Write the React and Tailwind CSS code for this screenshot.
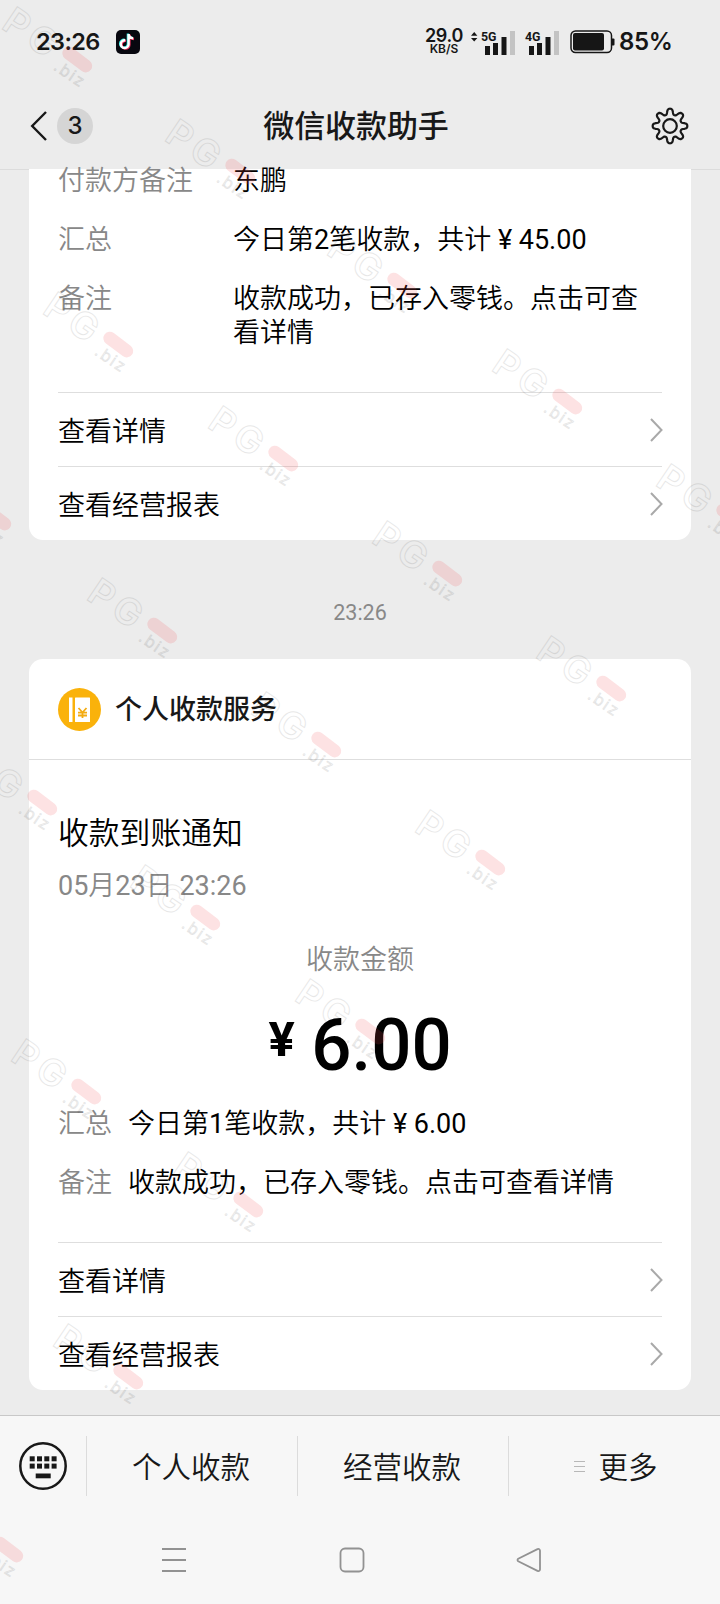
const WATERMARKS = [
  [77, 58], [240, 170], [402, 284], [567, 400], [731, 515],
  [118, 343], [283, 457], [447, 572], [611, 687],
  [-4, 516], [162, 629], [326, 743], [490, 861],
  [42, 801], [205, 916], [370, 1030],
  [86, 1090], [248, 1203],
  [128, 1375],
  [8, 1548],
];

function Watermark({ x, y }) {
  return (
    <div className="absolute h-0 w-0 rotate-[34deg]" style={{ left: x, top: y + 2 }}>
      <span className="absolute -left-[82px] -top-[16px] font-['Inter'] text-[37px] leading-[38px] font-semibold tracking-[5px] text-transparent opacity-[0.09] [-webkit-text-stroke:1px_#000]">
        PG
      </span>
      <span className="absolute -left-[17px] -top-[7px] h-[13px] w-[34px] rotate-[3deg] rounded-full bg-[#f04a4e]/16" />
      <span className="absolute -left-[15px] top-[5px] font-['Inter'] text-[16px] leading-[20px] tracking-[2px] text-transparent opacity-[0.1] [-webkit-text-stroke:0.8px_#000]">
        .biz
      </span>
    </div>
  );
}

function TikTokIcon() {
  const note = 'M12.6 4v10.2a3.9 3.9 0 1 1-3.4-3.9M12.6 4.2c.3 2.4 2 4 4.6 4.2';
  return (
    <svg className="h-6 w-6" viewBox="0 0 24 24" fill="none" strokeWidth="2.4">
      <rect width="24" height="24" rx="5" fill="#07070f" />
      <path d={note} stroke="#25e5df" transform="translate(-.7 -.5)" />
      <path d={note} stroke="#f2315f" transform="translate(.8 .6)" />
      <path d={note} stroke="#fff" />
    </svg>
  );
}

function Signal({ label, arrows }) {
  return (
    <svg className="h-[26px] w-[46px]" viewBox="0 0 46 26" fill="#161616">
      {arrows && <path d="M1 6.7 4.2 3l3.2 3.7zM1 8.9h6.4L4.2 12.6z" />}
      <text x="11" y="12" fontFamily="Roboto" fontSize="13.5" fontWeight="700" textLength="15.5" lengthAdjust="spacingAndGlyphs">{label}</text>
      <rect x="15" y="17" width="5" height="9" />
      <rect x="23" y="14" width="5" height="12" />
      <rect x="31.5" y="8" width="5" height="18" />
      <rect x="40" y="2" width="5" height="24" fill="#c3c3c3" />
    </svg>
  );
}

function BatteryIcon() {
  return (
    <svg className="h-[24px] w-[46px]" viewBox="0 0 46 24" fill="none">
      <rect x="1" y="1" width="40.5" height="21.5" rx="4.5" stroke="#161616" strokeWidth="1.5" />
      <rect x="3" y="3" width="31" height="17.5" rx="2" fill="#161616" />
      <path d="M42 8.5h1.5q1 0 1 1v5q0 1-1 1H42z" fill="#161616" />
    </svg>
  );
}

// gear outline: eight rounded teeth around the centre
const GEAR = Array.from({ length: 192 }, (_, i) => {
  const a = (i / 192) * Math.PI * 2;
  const r = 14.5 + 3.1 * Math.tanh(1.5 * Math.cos(8 * a));
  return `${i ? 'L' : 'M'}${(r * Math.cos(a)).toFixed(2)} ${(r * Math.sin(a)).toFixed(2)}`;
}).join('') + 'Z';

function GearIcon() {
  return (
    <svg className="h-[38px] w-[38px]" viewBox="-19 -19 38 38" fill="none" stroke="#181818" strokeWidth="2.2" strokeLinejoin="round">
      <circle r="6.8" />
      <path d={GEAR} />
    </svg>
  );
}

function Chevron() {
  return (
    <svg className="-mr-[1px] h-6 w-[13px]" viewBox="0 0 13 24" fill="none" stroke="#a9a9a9" strokeWidth="2">
      <path d="m1 1 10.500 11L1 23" />
    </svg>
  );
}

function ServiceIcon() {
  return (
    <svg className="h-[43px] w-[43px]" viewBox="0 0 43 43">
      <circle cx="21.5" cy="21.5" r="21.5" fill="#fab20b" />
      <rect x="11" y="9.5" width="3.5" height="24.5" fill="#fff" />
      <rect x="17" y="9.5" width="15" height="24.5" rx=".5" fill="#fff" />
      <path d="m20.500 20 4 4.500 4-4.500M24.500 24.500V30M20 24.700h9M20 27.500h9" fill="none" stroke="#f3ac14" strokeWidth="1.8" />
    </svg>
  );
}

function KeyboardIcon() {
  return (
    <svg className="h-12 w-12" viewBox="0 0 48 48" fill="#181818">
      <circle cx="24" cy="24" r="22.7" fill="none" stroke="#181818" strokeWidth="2.5" />
      {[10.7, 18, 25.3, 32.6].map(x => (
        <g key={x}>
          <rect x={x} y="14.3" width="5" height="5" />
          <rect x={x} y="21.6" width="5" height="5" />
        </g>
      ))}
      <rect x="16.7" y="31.5" width="15" height="4.8" />
    </svg>
  );
}

// digits are one step heavier than the Chinese text around them
function Num({ children }) {
  return <span className="font-normal">{children}</span>;
}

function InfoRow({ label, labelWidth, children }) {
  return (
    <div className="flex leading-[34px]">
      <span className={`shrink-0 text-[#888] ${labelWidth}`}>{label}</span>
      <span className="flex-1">{children}</span>
    </div>
  );
}

function LinkRow({ children }) {
  return (
    <div className="flex h-[74px] items-center justify-between border-t border-[#dedede]">
      <span className="pt-[5px]">{children}</span>
      <Chevron />
    </div>
  );
}

function MenuItem({ children }) {
  return (
    <div className="flex h-[60px] w-[211px] items-center justify-center border-l border-[#dcdcdc]">
      {children}
    </div>
  );
}

export default function App() {
  return (
    <div className="relative flex h-[1604px] w-[720px] flex-col overflow-hidden bg-[#ececec] font-['Roboto','Noto_Sans_CJK_SC',sans-serif] text-[27px] font-[350] text-black">
      {/* status bar */}
      <div className="flex h-[83px] shrink-0 items-center pl-9 font-['Inter'] text-[#161616]">
        <span className="w-20 text-[23.5px] font-semibold tracking-[-0.6px]">23:26</span>
        <TikTokIcon />
        <div className="ml-[284px] flex w-10 flex-col items-center leading-none font-semibold">
          <span className="text-[18px] leading-[14px] tracking-[-0.3px]">29.0</span>
          <span className="text-[12px] leading-[11px]">KB/S</span>
        </div>
        <div className="ml-[6px] flex items-center">
          <Signal label="5G" arrows />
          <div className="-ml-[2px]"><Signal label="4G" /></div>
        </div>
        <div className="ml-[10px]"><BatteryIcon /></div>
        <span className="ml-[3px] text-[24px] font-semibold tracking-[-0.4px]">85%</span>
      </div>

      {/* nav header */}
      <header className="flex h-[86px] shrink-0 items-center justify-between pr-[31px] pl-[30px] text-[#181818]">
        <div className="flex w-[70px] items-center gap-[10px]">
          <svg className="h-[30px] w-[17px]" viewBox="0 0 17 30" fill="none" stroke="#181818" strokeWidth="2.4">
            <path d="M16 1 2.200 15 16 29" />
          </svg>
          <span className="flex h-9 w-9 items-center justify-center rounded-full bg-[#d5d5d5] font-['Inter'] text-[24px] font-medium">3</span>
        </div>
        <h1 className="pt-[2px] pr-[7px] text-[31px] font-medium tracking-[-0.1px]">微信收款助手</h1>
        <div className="flex w-[70px] justify-end"><GearIcon /></div>
      </header>

      <main className="flex flex-1 flex-col border-t border-[#dcdcdc] px-[29px]">
        <section className="-mt-px h-[371px] rounded-b-[14px] bg-white px-[29px]">
          <div className="-mt-[5px] flex h-[228px] flex-col gap-[25px]">
            <InfoRow label="付款方备注" labelWidth="w-[175px]">东鹏</InfoRow>
            <InfoRow label="汇总" labelWidth="w-[175px]">今日第<Num>2</Num>笔收款，共计<Num> ¥ 45.00</Num></InfoRow>
            <InfoRow label="备注" labelWidth="w-[175px]">收款成功，已存入零钱。点击可查看详情</InfoRow>
          </div>
          <LinkRow>查看详情</LinkRow>
          <LinkRow>查看经营报表</LinkRow>
        </section>

        <div className="flex h-[119px] items-center justify-center pt-7 text-[21.5px] font-normal text-[#888]">23:26</div>

        <section className="h-[731px] rounded-[14px] bg-white">
          <div className="flex h-[101px] items-center gap-[14px] border-b border-[#dedede] px-[29px] text-[#181818]">
            <ServiceIcon />
            <h2 className="pt-[3px] font-medium">个人收款服务</h2>
          </div>
          <div className="px-[29px]">
            <div className="pt-[51px] text-[30.8px] leading-[46px]">收款到账通知</div>
            <div className="mt-[10px] leading-[38px] text-[#888]"><Num>05</Num>月<Num>23</Num>日<Num> 23:26</Num></div>
            <div className="mt-[36px] text-center leading-[38px] text-[#888]">收款金额</div>
            <div className="mt-[29px] flex h-[74px] justify-center gap-[12px] font-medium">
              <span className="pt-[8px] text-[49px] leading-[48px] font-bold">¥</span>
              <span className="origin-right scale-x-[0.97] text-[73px] leading-[74px]">6.00</span>
            </div>
            <div className="mt-[25px] flex h-[135px] flex-col gap-[25px]">
              <InfoRow label="汇总" labelWidth="w-[70px]">今日第<Num>1</Num>笔收款，共计<Num> ¥ 6.00</Num></InfoRow>
              <InfoRow label="备注" labelWidth="w-[70px]">收款成功，已存入零钱。点击可查看详情</InfoRow>
            </div>
            <LinkRow>查看详情</LinkRow>
            <LinkRow>查看经营报表</LinkRow>
          </div>
        </section>
      </main>

      {/* service menu */}
      <footer className="flex h-[189px] shrink-0 flex-col border-t border-[#c8c8c8] bg-[#f7f7f7] text-[#181818]">
        <div className="flex h-[100px] items-center text-[29.5px]">
          <div className="flex w-[86px] justify-center"><KeyboardIcon /></div>
          <MenuItem><span className="pt-[5px] pr-[2px]">个人收款</span></MenuItem>
          <MenuItem><span className="pt-[5px] pr-[2px]">经营收款</span></MenuItem>
          <MenuItem>
            <svg className="mr-[13px] ml-1 h-[12px] w-[11px]" viewBox="0 0 11 12" stroke="#b8b8b8">
              <path d="M0 1.500h11M0 6.500h11M0 11.500h11" />
            </svg>
            <span className="pt-[5px]">更多</span>
          </MenuItem>
        </div>
        <div className="flex h-[87px] items-center pl-[161px]">
          <svg className="h-[26px] w-[26px]" viewBox="0 0 26 26" stroke="#929292" strokeWidth="1.8">
            <path d="M1 2h24M1 13h24M1 24h24" />
          </svg>
          <svg className="ml-[152px] h-[26px] w-[26px]" viewBox="0 0 26 26" fill="none" stroke="#929292" strokeWidth="1.8">
            <rect x="1.5" y="1.5" width="23" height="23" rx="4.5" />
          </svg>
          <svg className="ml-[151px] h-[26px] w-[26px]" viewBox="0 0 26 26" fill="none" stroke="#929292" strokeWidth="1.8" strokeLinejoin="round">
            <path d="M2.200 11.800 21.500 2.100q2.300-.7 2.500 1.600v18.600q-.2 2.300-2.500 1.600L2.200 14.200q-1.400-1.200 0-2.400z" />
          </svg>
        </div>
      </footer>

      <div className="pointer-events-none absolute inset-0 overflow-hidden" aria-hidden="true">
        {WATERMARKS.map(([x, y]) => (
          <Watermark key={`${x}-${y}`} x={x} y={y} />
        ))}
      </div>
    </div>
  );
}
